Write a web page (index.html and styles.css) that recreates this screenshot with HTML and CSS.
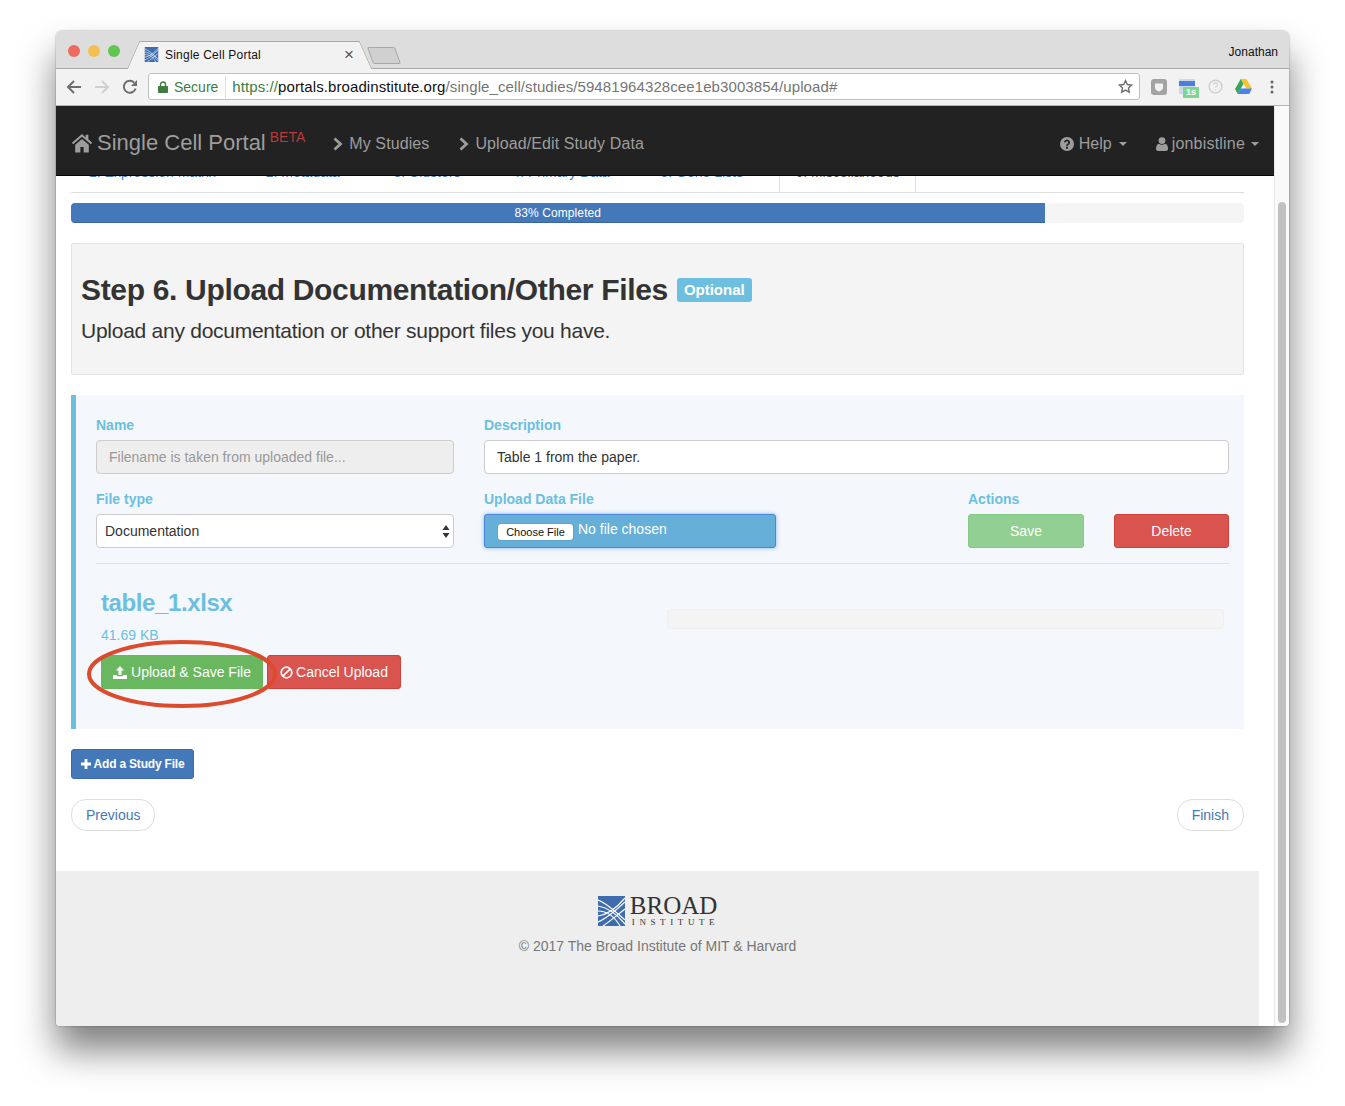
FILE: index.html
```html
<!DOCTYPE html>
<html lang="en">
<head>
  <meta charset="UTF-8" />
  <title>Single Cell Portal</title>
  <link rel="stylesheet" href="styles.css">
</head>
<body>
  <svg class="defs" width="0" height="0">
    <symbol id="broad-mark" viewBox="0 0 27 30">
      <rect width="27" height="30" fill="#3f6cad"/>
      <g fill="none" stroke="#fff" stroke-width="1.2">
        <path d="M0 4 C8 7 15 13 27 24"/>
        <path d="M0 10 C8 11 16 15 27 28"/>
        <path d="M0 15 C8 15 15 18 22 30"/>
        <path d="M0 26 C8 23 15 17 27 6"/>
        <path d="M0 20 C8 19 16 15 27 2"/>
        <path d="M5 30 C11 26 18 20 27 13"/>
      </g>
    </symbol>
  </svg>

  <div class="window">
    <div class="titlebar">
      <div class="lights">
        <span class="light red"></span>
        <span class="light yellow"></span>
        <span class="light green"></span>
      </div>
      <div class="tab">
        <svg class="favicon" width="15" height="15"><use href="#broad-mark"/></svg>
        <span class="tab-title">Single Cell Portal</span>
        <span class="tab-close">×</span>
      </div>
      <div class="new-tab"></div>
      <span class="profile">Jonathan</span>
    </div>

    <div class="toolbar">
      <svg class="tool" width="16" height="16" viewBox="0 0 16 16"><path d="M15 8H2.500M8 2 2 8l6 6" fill="none" stroke="#6e6e6e" stroke-width="2"/></svg>
      <svg class="tool" width="16" height="16" viewBox="0 0 16 16"><path d="M1 8h12.500M8 2l6 6-6 6" fill="none" stroke="#d0d0d0" stroke-width="2"/></svg>
      <svg class="tool" width="16" height="16" viewBox="0 0 16 16"><path d="M13.600 9.500A6 6 0 1 1 12.200 3.600" fill="none" stroke="#6e6e6e" stroke-width="2"/><path d="M15 1v6H9z" fill="#6e6e6e"/></svg>
      <div class="omnibox">
        <svg class="lock" width="10" height="12" viewBox="0 0 10 12"><path d="M2.500 5V3.500a2.500 2.500 0 0 1 5 0V5" fill="none" stroke="#3d7d3f" stroke-width="1.400"/><rect y="5" width="10" height="7" rx="1" fill="#3d7d3f"/></svg>
        <span class="secure">Secure</span>
        <span class="url"><span class="url-https">https://</span><span class="url-host">portals.broadinstitute.org</span>/single_cell/studies/59481964328cee1eb3003854/upload#</span>
        <svg class="star" width="15" height="15" viewBox="0 0 24 24"><path d="M12 2.500l2.900 6.300 6.900.8-5.100 4.700 1.400 6.800-6.100-3.400-6.100 3.400 1.400-6.800L2.200 9.600l6.900-.8z" fill="none" stroke="#6e6e6e" stroke-width="2.200"/></svg>
      </div>
      <div class="extensions">
        <svg width="16" height="16" viewBox="0 0 16 16"><rect width="16" height="16" rx="3" fill="#a3a3a3"/><path d="M4 4.500h8v4c0 2-2 3.500-4 4-2-.5-4-2-4-4z" fill="#f2f2f2"/></svg>
        <span class="ext-calendar">
          <svg width="16" height="16" viewBox="0 0 16 16"><rect width="16" height="15" rx="1" fill="#cfd8e8"/><rect y="2" width="16" height="5" fill="#4a7fdc"/></svg>
          <span class="ext-badge">1s</span>
        </span>
        <svg width="15" height="15" viewBox="0 0 16 16"><circle cx="8" cy="8" r="6.800" fill="none" stroke="#cfcfcf" stroke-width="1.600"/><path d="M6 6.200a2 2 0 1 1 2.800 1.800c-.6.300-.8.700-.8 1.400M8 11v1.200" fill="none" stroke="#cfcfcf" stroke-width="1.200"/></svg>
        <svg width="17" height="15" viewBox="0 0 17 15"><path d="M5.700 0h5.600l5.700 9.600h-5.600z" fill="#f6c42e"/><path d="M5.700 0l2.800 4.800L2.800 15 0 10z" fill="#3ba55d"/><path d="M2.800 15l2.800-5.400H17L14.200 15z" fill="#4a82ea"/></svg>
        <svg class="dots" width="4" height="14" viewBox="0 0 4 14"><circle cx="2" cy="2" r="1.500" fill="#666"/><circle cx="2" cy="7" r="1.500" fill="#666"/><circle cx="2" cy="12" r="1.500" fill="#666"/></svg>
      </div>
    </div>

    <div class="viewport">
      <div class="page">
        <nav class="navbar">
          <a class="brand">
            <svg width="22" height="20" viewBox="0 0 24 22"><path d="M12 1 .8 10.600l1.500 1.800L12 4.200l9.700 8.200 1.500-1.800-4.200-3.600V2h-3v2.900zM4.500 13v8.500h5.700v-6h3.600v6h5.700V13L12 6.600z" fill="#9d9d9d"/></svg>
            <span class="brand-name">Single Cell Portal</span>
            <sup class="beta">BETA</sup>
          </a>
          <a class="nav-link link-studies">
            <svg width="10" height="14" viewBox="0 0 10 14"><path d="M1.500 1.500 7.500 7l-6 5.500" fill="none" stroke="#9d9d9d" stroke-width="2.800"/></svg>
            My Studies
          </a>
          <a class="nav-link">
            <svg width="10" height="14" viewBox="0 0 10 14"><path d="M1.500 1.500 7.500 7l-6 5.500" fill="none" stroke="#9d9d9d" stroke-width="2.800"/></svg>
            Upload/Edit Study Data
          </a>
          <a class="nav-link nav-help">
            <svg width="14" height="14" viewBox="0 0 14 14"><circle cx="7" cy="7" r="7" fill="#9d9d9d"/><path d="M4.800 5.400a2.200 2 0 1 1 3.300 1.800c-.8.400-1.100.8-1.100 1.500" fill="none" stroke="#222" stroke-width="1.700"/><rect x="6" y="9.700" width="2" height="2" fill="#222"/></svg>
            Help <span class="caret"></span>
          </a>
          <a class="nav-link nav-user">
            <svg width="12" height="14" viewBox="0 0 12 14"><circle cx="6" cy="3.600" r="3.400" fill="#9d9d9d"/><path d="M0 12c0-3 1-5 3-5.200 1.800 1.200 4.200 1.200 6 0 2 .2 3 2.200 3 5.200 0 1.300-1 2-2 2H2c-1 0-2-.7-2-2z" fill="#9d9d9d"/></svg>
            jonbistline <span class="caret"></span>
          </a>
        </nav>

        <main class="content">
          <ul class="wizard-tabs">
            <li class="wizard-tab tab-1">1. Expression Matrix ✓</li>
            <li class="wizard-tab tab-2">2. Metadata ✓</li>
            <li class="wizard-tab tab-3">3. Clusters ✓</li>
            <li class="wizard-tab tab-4">4. Primary Data ✓</li>
            <li class="wizard-tab tab-5">5. Gene Lists ✓</li>
            <li class="wizard-tab active">6. Miscellaneous</li>
          </ul>

          <div class="progress">
            <div class="progress-bar">83% Completed</div>
          </div>

          <section class="jumbotron">
            <div class="step-title">
              <h2>Step 6. Upload Documentation/Other Files</h2>
              <span class="badge">Optional</span>
            </div>
            <p>Upload any documentation or other support files you have.</p>
          </section>

          <section class="file-panel">
            <div class="form-row">
              <div class="col-name">
                <label>Name</label>
                <input class="field" type="text" placeholder="Filename is taken from uploaded file..." disabled>
              </div>
              <div class="col-desc">
                <label>Description</label>
                <input class="field" type="text" value="Table 1 from the paper.">
              </div>
            </div>

            <div class="form-row row-second">
              <div class="col-name">
                <label>File type</label>
                <div class="field select">
                  <span>Documentation</span>
                  <svg width="8" height="13" viewBox="0 0 8 13"><path d="M4 0l3.500 5H.5zM4 13 .5 8h7z" fill="#333"/></svg>
                </div>
              </div>
              <div class="col-file">
                <label>Upload Data File</label>
                <div class="file-input">
                  <span class="file-button">Choose File</span>
                  <span class="file-text">No file chosen</span>
                </div>
              </div>
              <div class="col-actions">
                <label>Actions</label>
                <div class="actions">
                  <a class="btn btn-save">Save</a>
                  <a class="btn btn-delete">Delete</a>
                </div>
              </div>
            </div>

            <hr>

            <div class="upload-row">
              <div class="upload-info">
                <h3>table_1.xlsx</h3>
                <div class="file-size">41.69 KB</div>
                <div class="upload-buttons">
                  <a class="btn btn-upload">
                    <svg width="14" height="13" viewBox="0 0 14 13"><path d="M7 0l4 4.500H8.500V9h-3V4.500H3z" fill="#fff"/><path d="M0 9h4v1.200h6V9h4v4H0z" fill="#fff"/></svg>
                    Upload &amp; Save File
                  </a>
                  <a class="btn btn-cancel">
                    <svg width="13" height="13" viewBox="0 0 13 13"><circle cx="6.500" cy="6.500" r="5.300" fill="none" stroke="#fff" stroke-width="1.700"/><path d="M2.800 10.200l7.400-7.400" stroke="#fff" stroke-width="1.700"/></svg>
                    Cancel Upload
                  </a>
                  <svg class="highlight" width="192" height="72" viewBox="0 0 192 72"><ellipse cx="96" cy="35" rx="93" ry="32" fill="none" stroke="#dd4b2f" stroke-width="4"/></svg>
                </div>
              </div>
              <div class="upload-progress"></div>
            </div>
          </section>

          <a class="btn btn-add">
            <svg width="10" height="10" viewBox="0 0 10 10"><path d="M5 0v10M0 5h10" stroke="#fff" stroke-width="2.800"/></svg>
            Add a Study File
          </a>

          <div class="pager">
            <a class="pill">Previous</a>
            <a class="pill">Finish</a>
          </div>
        </main>

        <footer class="footer">
          <div class="logo">
            <svg width="27" height="30"><use href="#broad-mark"/></svg>
            <div class="logo-text">
              <div class="logo-broad">BROAD</div>
              <div class="logo-institute">INSTITUTE</div>
            </div>
          </div>
          <p>© 2017 The Broad Institute of MIT &amp; Harvard</p>
        </footer>
      </div>

      <div class="scrollbar">
        <div class="scroll-thumb"></div>
      </div>
    </div>
  </div>
</body>
</html>
```

FILE: styles.css
```css
body {
  font-family: "Liberation Sans", Arial, sans-serif;
  margin: 0;
  padding: 31px 56px 0;
  height: 1075px;
  overflow: hidden;
  background-color: #ffffff;
  color: #333333;
  font-size: 14px;
}

.defs {
  position: absolute;
}

.window {
  width: 1233px;
  height: 995px;
  border-radius: 6px 6px 4px 4px;
  overflow: hidden;
  display: flex;
  flex-direction: column;
  background-color: #ffffff;
  box-shadow: 0 24px 36px rgba(0, 0, 0, 0.5), 0 0 2px rgba(0, 0, 0, 0.4);
}

/* browser title bar */
.titlebar {
  height: 37px;
  flex: none;
  display: flex;
  align-items: flex-end;
  background-color: #dddddd;
  border-bottom: 1px solid #a8a8a8;
  position: relative;
}

.lights {
  display: flex;
  gap: 8px;
  margin: 0 0 11px 12px;
}

.light {
  width: 12px;
  height: 12px;
  border-radius: 50%;
}

.light.red { background-color: #ec6a5e; }
.light.yellow { background-color: #f5bf4f; }
.light.green { background-color: #61c554; }

.tab {
  width: 219px;
  height: 28px;
  margin: 0 0 -1px 20px;
  padding: 0 5px 2px 4px;
  box-sizing: border-box;
  display: flex;
  align-items: center;
  position: relative;
  background-color: #f2f2f2;
  border-top: 1px solid #a8a8a8;
  font-size: 12px;
  color: #111111;
}

.tab::before,
.tab::after {
  content: "";
  position: absolute;
  top: -1px;
  bottom: 0;
  width: 14px;
  background-color: #f2f2f2;
  border-top: 1px solid #a8a8a8;
}

.tab::before {
  left: -7px;
  transform: skewX(-24deg);
  border-left: 1px solid #a8a8a8;
  border-radius: 2px 0 0 0;
}

.tab::after {
  right: -7px;
  transform: skewX(24deg);
  border-right: 1px solid #a8a8a8;
  border-radius: 0 2px 0 0;
}

.favicon {
  flex: none;
  position: relative;
  z-index: 1;
}

.tab-title {
  margin-left: 6px;
  flex: 1;
  letter-spacing: 0.22px;
  position: relative;
  z-index: 1;
}

.tab-close {
  font-size: 17px;
  color: #555555;
  position: relative;
  z-index: 1;
}

.new-tab {
  width: 26px;
  height: 15px;
  margin: 0 0 4px 11px;
  background-color: #d0d0d0;
  border: 1px solid #a8a8a8;
  border-radius: 2px;
  transform: skewX(20deg);
}

.profile {
  margin: 0 11px 9px auto;
  font-size: 12px;
  color: #111111;
}

/* browser toolbar */
.toolbar {
  height: 37px;
  flex: none;
  box-sizing: border-box;
  display: flex;
  align-items: center;
  background-color: #f2f2f2;
  border-bottom: 1px solid #b5b5b5;
  padding: 0 0 1px 10px;
}

.tool {
  margin-right: 12px;
}

.omnibox {
  width: 992px;
  height: 27px;
  margin-left: -2px;
  box-sizing: border-box;
  display: flex;
  align-items: center;
  background-color: #ffffff;
  border: 1px solid #c0c0c0;
  border-radius: 3px;
  padding: 0 6px 0 9px;
  font-size: 14px;
  color: #757575;
}

.secure {
  color: #3d7d3f;
  margin-left: 6px;
  padding-right: 7px;
  border-right: 1px solid #dddddd;
  line-height: 22px;
}

.url {
  margin-left: 6px;
  flex: 1;
  font-size: 15px;
  letter-spacing: 0.09px;
  white-space: nowrap;
}

.url-https { color: #3d7d3f; }
.url-host { color: #111111; }

.extensions {
  display: flex;
  align-items: center;
  margin-left: 11px;
  gap: 12px;
}

.ext-calendar {
  position: relative;
  display: flex;
  margin-right: 1px;
}

.ext-badge {
  position: absolute;
  left: 4px;
  top: 8px;
  width: 16px;
  height: 11px;
  background-color: #7fd694;
  color: #ffffff;
  font-size: 9px;
  font-weight: bold;
  line-height: 11px;
  text-align: center;
}

.dots {
  margin-left: 6px;
}

/* page */
.viewport {
  flex: 1;
  display: flex;
  min-height: 0;
}

.page {
  width: 1218px;
  flex: none;
  display: flex;
  flex-direction: column;
}

.navbar {
  height: 70px;
  flex: none;
  box-sizing: border-box;
  display: flex;
  align-items: center;
  background-color: #222222;
  border-bottom: 1px solid #080808;
  padding: 4px 0 0 15px;
  color: #9d9d9d;
}

.navbar a {
  display: flex;
  align-items: center;
}

.brand {
  font-size: 22px;
}

.brand-name {
  margin-left: 4px;
}

.beta {
  color: #b93a3a;
  font-size: 14px;
  margin: -11px 0 0 4px;
}

.nav-link {
  font-size: 16px;
  letter-spacing: 0.1px;
  gap: 6px;
  margin: 2px 0 0 30px;
}

.link-studies {
  margin-left: 28px;
}

.nav-help {
  margin-left: auto;
  gap: 5px;
  letter-spacing: 0;
}

.nav-user {
  gap: 4px;
  margin-left: 29px;
  margin-right: 15px;
  letter-spacing: 0.2px;
}

.caret {
  width: 0;
  height: 0;
  margin-left: 2px;
  border-top: 4px solid #9d9d9d;
  border-left: 4px solid transparent;
  border-right: 4px solid transparent;
}

.content {
  flex: 1;
  padding: 0 30px 0 15px;
}

/* wizard tabs, scrolled mostly under the navbar */
.wizard-tabs {
  height: 16px;
  margin: 0;
  padding: 0;
  list-style: none;
  display: flex;
  overflow: hidden;
  border-bottom: 1px solid #dddddd;
  position: relative;
}

.wizard-tab {
  margin-top: -14px;
  line-height: 20px;
  color: #4478b8;
  white-space: nowrap;
}

.tab-1 { margin-left: 18px; }
.tab-2 { margin-left: 34px; }
.tab-3 { margin-left: 38px; }
.tab-4 { margin-left: 36px; }
.tab-5 { margin-left: 35px; }

.wizard-tab.active {
  color: #555555;
  margin-left: 20px;
  padding: 0 15.5px;
  height: 40px;
  background-color: #ffffff;
  border-left: 1px solid #dddddd;
  border-right: 1px solid #dddddd;
}

.progress {
  height: 20px;
  margin-top: 10px;
  background-color: #f5f5f5;
  border-radius: 4px;
  overflow: hidden;
}

.progress-bar {
  width: 83%;
  height: 20px;
  background-color: #4478b8;
  color: #ffffff;
  font-size: 12px;
  line-height: 20px;
  letter-spacing: 0.1px;
  text-align: center;
  box-shadow: inset 0 -1px 0 rgba(0, 0, 0, 0.15);
}

.jumbotron {
  height: 132px;
  box-sizing: border-box;
  margin-top: 20px;
  padding: 29px 9px 0;
  background-color: #f4f4f4;
  border: 1px solid #e3e3e3;
  border-radius: 2px;
}

.step-title {
  display: flex;
  align-items: center;
  gap: 9px;
}

.step-title h2 {
  margin: 0;
  font-size: 30px;
  line-height: 33px;
  font-weight: bold;
  letter-spacing: -0.33px;
  color: #333333;
}

.badge {
  background-color: #6cbfdf;
  color: #ffffff;
  font-size: 15px;
  font-weight: bold;
  line-height: 24px;
  padding: 0 7px;
  border-radius: 3px;
}

.jumbotron p {
  margin: 10px 0 0;
  font-size: 21px;
  line-height: 30px;
  letter-spacing: -0.26px;
}

.file-panel {
  height: 334px;
  box-sizing: border-box;
  margin-top: 20px;
  padding: 20px 15px 0 20px;
  background-color: #f4f7fb;
  border-left: 5px solid #6cbfdf;
}

.form-row {
  display: flex;
  gap: 30px;
}

.row-second {
  margin-top: 15px;
}

.form-row label {
  display: block;
  height: 20px;
  line-height: 20px;
  margin-bottom: 5px;
  font-weight: bold;
  color: #6cbfdf;
}

.col-name { width: 358px; flex: none; }
.col-desc { flex: 1; }
.col-file { width: 292px; flex: none; }
.col-actions { margin-left: 162px; flex: 1; }

.field {
  display: block;
  width: 100%;
  height: 34px;
  box-sizing: border-box;
  padding: 0 12px;
  background-color: #ffffff;
  border: 1px solid #cccccc;
  border-radius: 4px;
  font-family: inherit;
  font-size: 14px;
  color: #333333;
}

.field:disabled {
  background-color: #eeeeee;
}

.field::placeholder {
  color: #999999;
}

.select {
  display: flex;
  align-items: center;
  justify-content: space-between;
  padding: 0 3px 0 8px;
}

.file-input {
  height: 34px;
  box-sizing: border-box;
  display: flex;
  align-items: center;
  padding-left: 13px;
  background-color: #66afd8;
  border: 1px solid #4a86d8;
  border-radius: 3px;
  box-shadow: 0 0 4px #7fb4f0;
  color: #ffffff;
}

.file-button {
  width: 75px;
  height: 16px;
  background-color: #ffffff;
  border-radius: 3px;
  box-shadow: 0 0 1px #555555;
  color: #111111;
  font-size: 11px;
  line-height: 16px;
  text-align: center;
  margin-top: 1px;
}

.file-text {
  margin: -4px 0 0 5px;
}

.actions {
  display: flex;
  gap: 30px;
}

.btn {
  display: inline-flex;
  align-items: center;
  justify-content: center;
  height: 34px;
  box-sizing: border-box;
  border-radius: 3px;
  color: #ffffff;
}

.btn-save {
  width: 116px;
  background-color: #91cf92;
  border: 1px solid #86c987;
}

.btn-delete {
  width: 115px;
  background-color: #d9534f;
  border: 1px solid #d43f3a;
}

.file-panel hr {
  margin: 15px 0 0;
  border: none;
  border-top: 1px solid #dfe2e5;
}

.upload-row {
  display: flex;
  justify-content: space-between;
  padding: 25px 5px 0;
}

.upload-info h3 {
  margin: 0;
  font-size: 24px;
  line-height: 28px;
  font-weight: bold;
  letter-spacing: -0.4px;
  color: #6cbfdf;
}

.file-size {
  margin-top: 9px;
  line-height: 18px;
  color: #6cbfdf;
}

.upload-buttons {
  display: flex;
  gap: 4px;
  margin-top: 11px;
  position: relative;
}

.btn-upload {
  width: 162px;
  gap: 4px;
  background-color: #69b85f;
}

.btn-cancel {
  width: 134px;
  gap: 3px;
  background-color: #d9534f;
  border: 1px solid #d43f3a;
}

.highlight {
  position: absolute;
  left: -15px;
  top: -16px;
}

.upload-progress {
  width: 557px;
  height: 20px;
  box-sizing: border-box;
  margin-top: 20px;
  background-color: #f4f4f4;
  border: 1px solid #efefef;
  border-radius: 4px;
}

.btn-add {
  width: 123px;
  height: 30px;
  gap: 3px;
  margin-top: 20px;
  background-color: #4478b8;
  border: 1px solid #3b6ca8;
  font-size: 12px;
  font-weight: bold;
  letter-spacing: -0.2px;
}

.pager {
  display: flex;
  justify-content: space-between;
  margin-top: 20px;
}

.pill {
  height: 32px;
  box-sizing: border-box;
  padding: 0 14px;
  line-height: 30px;
  background-color: #ffffff;
  border: 1px solid #dddddd;
  border-radius: 15px;
  color: #4478b8;
}

.footer {
  height: 155px;
  flex: none;
  box-sizing: border-box;
  margin-right: 15px;
  padding-top: 25px;
  background-color: #eeeeee;
  color: #777777;
  text-align: center;
}

.footer p {
  margin: 11px 0 0;
  line-height: 16px;
}

.logo {
  display: flex;
  justify-content: center;
  gap: 5px;
  padding-left: 2px;
  color: #333333;
  font-family: "Liberation Serif", serif;
}

.logo-text {
  text-align: left;
}

.logo-broad {
  font-size: 25px;
  line-height: 20px;
}

.logo-institute {
  font-size: 9px;
  line-height: 9px;
  letter-spacing: 4.6px;
  margin: 2px 0 0 2px;
}

/* scrollbar */
.scrollbar {
  width: 15px;
  flex: none;
  box-sizing: border-box;
  background-color: #fafafa;
  border-left: 1px solid #e8e8e8;
  padding: 96px 3px 3px;
}

.scroll-thumb {
  height: 100%;
  background-color: #c1c1c1;
  border-radius: 4px;
}
```
